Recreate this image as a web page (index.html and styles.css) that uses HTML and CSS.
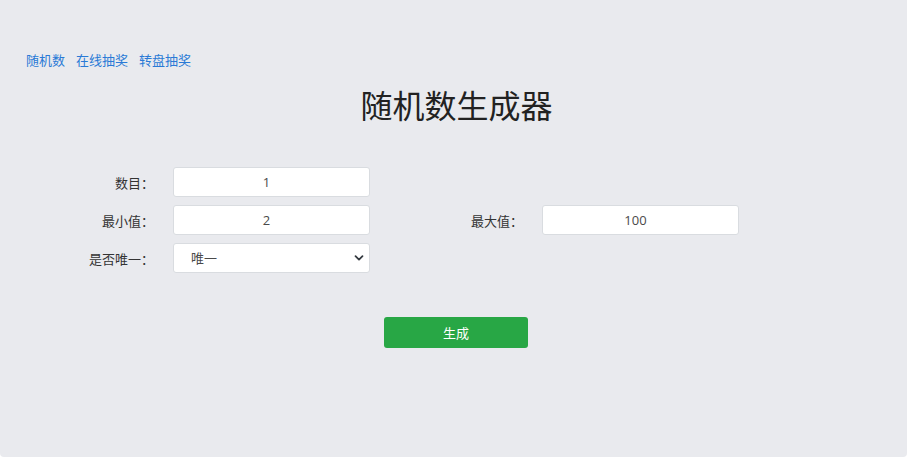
FILE: index.html
```html
<!DOCTYPE html>
<html lang="zh-CN">
<head>
<meta charset="utf-8">
<title>随机数生成器</title>
<link rel="stylesheet" href="styles.css">
</head>
<body>
<div class="page">
  <nav class="links">
    <a href="#">随机数</a>
    <a href="#">在线抽奖</a>
    <a href="#">转盘抽奖</a>
  </nav>
  <h1 class="title">随机数生成器</h1>
  <form class="form">
    <div class="row">
      <label class="label">数目：</label>
      <div class="field"><input class="input" type="text" value="1"></div>
    </div>
    <div class="row">
      <label class="label">最小值：</label>
      <div class="field"><input class="input" type="text" value="2"></div>
      <label class="label">最大值：</label>
      <div class="field"><input class="input" type="text" value="100"></div>
    </div>
    <div class="row row-last">
      <label class="label">是否唯一：</label>
      <div class="field">
        <div class="select-wrap">
          <select class="select">
            <option>唯一</option>
            <option>不唯一</option>
          </select>
          <svg class="chev" width="10" height="8" viewBox="0 0 10 8"><path d="M1.5 2.2 L5 5.6 L8.5 2.2" fill="none" stroke="#343a40" stroke-width="1.8" stroke-linecap="round" stroke-linejoin="round"/></svg>
        </div>
      </div>
    </div>
    <div class="actions">
      <button type="button" class="btn">生成</button>
    </div>
  </form>
</div>
</body>
</html>
```
FILE: styles.css
```css
html, body {
  margin: 0;
  padding: 0;
  background: #ffffff;
}
body {
  font-family: "Open Sans", "Noto Sans CJK SC", sans-serif;
  color: #333333;
  font-size: 13px;
}
.page {
  background: #e9eaee;
  height: 457px;
  border-radius: 0 0 4px 4px;
  box-sizing: border-box;
  padding: 51px 0 0 0;
}
.links {
  display: flex;
  gap: 11px;
  padding-left: 26px;
  line-height: 18px;
  height: 18px;
}
.links a {
  color: #2a7ad6;
  text-decoration: none;
  font-size: 13px;
}
.title {
  margin: 17px 0 0 0;
  text-align: center;
  font-size: 32px;
  font-weight: 400;
  line-height: 40px;
  color: #222222;
  padding-left: 6px;
}
.form {
  margin: 41px 0 0 13px;
  width: 886px;
}
.row {
  display: flex;
  align-items: center;
  margin-bottom: 8px;
}
.row-last {
  margin-top: 1px;
}
.label {
  width: 148px;
  box-sizing: border-box;
  padding-right: 7px;
  text-align: right;
  font-size: 13px;
  color: #333333;
}
.field {
  width: 221px;
  box-sizing: border-box;
  padding: 0 12px;
}
.input, .select {
  display: block;
  width: 197px;
  height: 30px;
  box-sizing: border-box;
  border: 1px solid #d9dce0;
  border-radius: 3px;
  background: #ffffff;
  font-family: "Open Sans", "Noto Sans CJK SC", sans-serif;
  font-size: 13px;
  color: #4a4a4a;
  outline: none;
}
.input {
  text-align: center;
  padding: 0 18px 0 8px;
}
.select-wrap {
  position: relative;
  width: 197px;
}
.select {
  appearance: none;
  -webkit-appearance: none;
  padding: 0 24px 0 17px;
}
.chev {
  position: absolute;
  right: 6px;
  top: 11px;
  pointer-events: none;
}
.actions {
  display: flex;
  justify-content: center;
  margin-top: 44px;
}
.btn {
  width: 144px;
  height: 31px;
  background: #28a745;
  color: #ffffff;
  border: none;
  border-radius: 3px;
  font-family: "Open Sans", "Noto Sans CJK SC", sans-serif;
  font-size: 13px;
  cursor: pointer;
}
```
